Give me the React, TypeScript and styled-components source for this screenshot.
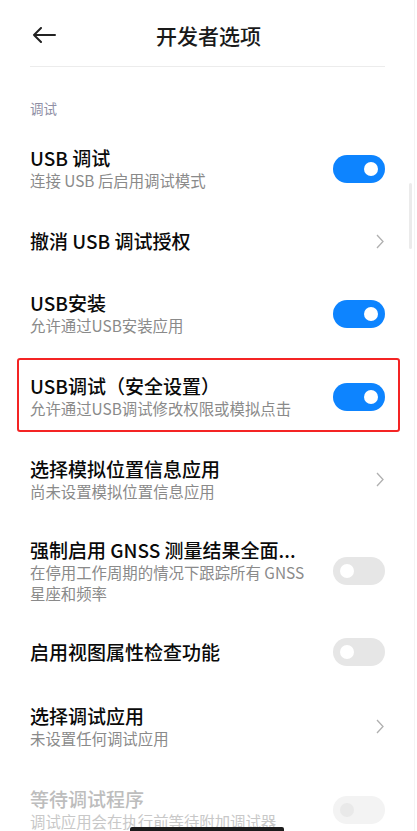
import React from "react";
import styled, { createGlobalStyle, css } from "styled-components";

const GlobalStyle = createGlobalStyle`
  html, body {
    margin: 0;
    padding: 0;
    background: #ffffff;
    overflow: hidden;
  }
  body {
    font-family: "Noto Sans CJK SC", "Noto Sans", sans-serif;
    -webkit-font-smoothing: antialiased;
  }
`;

const Page = styled.div`
  width: 417px;
  height: 831px;
  overflow: hidden;
  position: relative;
  background: #ffffff;
`;

const Header = styled.header`
  display: grid;
  grid-template-columns: 1fr auto 1fr;
  align-items: center;
  height: 62px;
  padding: 4px 32px 0 32px;
`;

const BackButton = styled.button`
  display: flex;
  align-items: center;
  justify-self: start;
  background: none;
  border: 0;
  padding: 0;
  width: 24px;
  height: 16px;
`;

const HeaderTitle = styled.h1`
  margin: 0;
  font-size: 21px;
  font-weight: 500;
  color: #1a1a1a;
  line-height: 28px;
`;

const Divider = styled.div`
  height: 1px;
  background: #ececec;
  margin: 0 32px 0 30px;
`;

const SectionLabel = styled.div`
  padding: 32px 30px 10px;
  font-size: 13.5px;
  line-height: 18px;
  color: #8f8fa5;
`;

const Row = styled.div<{ $highlight?: boolean; $tight?: boolean }>`
  position: relative;
  display: flex;
  align-items: center;
  padding: ${(p) => (p.$tight ? "17px 32px 15px 30px" : "19px 32px 19px 30px")};
  ${(p) =>
    p.$highlight &&
    css`
      &::after {
        content: "";
        position: absolute;
        top: 3px;
        bottom: 6px;
        left: 17px;
        right: 17px;
        border: 2.5px solid #f42424;
        border-radius: 3px;
        pointer-events: none;
      }
    `}
`;

const TextBlock = styled.div`
  flex: 1;
  min-width: 0;
  padding-right: 22px;
`;

const Title = styled.div<{ $disabled?: boolean }>`
  font-size: 19px;
  line-height: 24px;
  font-weight: 500;
  color: ${(p) => (p.$disabled ? "#bdbdbd" : "#0a0a0a")};
  white-space: nowrap;
`;

const Subtitle = styled.div<{ $disabled?: boolean }>`
  font-size: 15.4px;
  line-height: 21px;
  color: ${(p) => (p.$disabled ? "#c8c8c8" : "#8a8a8a")};
`;

const Track = styled.div<{ $on: boolean; $disabled?: boolean }>`
  flex: none;
  width: 52px;
  height: 28px;
  border-radius: 14px;
  display: flex;
  align-items: center;
  justify-content: ${(p) => (p.$on ? "flex-end" : "flex-start")};
  padding: 0 7px;
  box-sizing: border-box;
  background: ${(p) => (p.$on ? "#0d84ff" : p.$disabled ? "#f3f3f3" : "#e6e6e6")};
`;

const Knob = styled.div<{ $disabled?: boolean }>`
  width: 14px;
  height: 14px;
  border-radius: 50%;
  background: ${(p) => (p.$disabled ? "#e9e9e9" : "#ffffff")};
`;

const ChevronBox = styled.div`
  flex: none;
  width: 52px;
  display: flex;
  justify-content: flex-end;
  padding-right: 1px;
  box-sizing: border-box;
`;

const Scrollbar = styled.div`
  position: absolute;
  left: 409px;
  top: 183px;
  width: 3px;
  height: 66px;
  border-radius: 2px;
  background: #ebebeb;
`;

const EdgeLine = styled.div`
  position: absolute;
  right: 2px;
  top: 0;
  bottom: 0;
  width: 1px;
  background: #f4f4f4;
`;

const HomeBar = styled.div`
  position: absolute;
  left: 130px;
  bottom: 0;
  width: 154px;
  height: 4px;
  border-radius: 2px 2px 0 0;
  background: #1c1c1c;
`;

const Toggle = ({ on, disabled }: { on: boolean; disabled?: boolean }) => (
  <Track $on={on} $disabled={disabled}>
    <Knob $disabled={disabled} />
  </Track>
);

const Chevron = () => (
  <ChevronBox>
    <svg width="8" height="15" viewBox="0 0 8 15">
      <polyline points="1,1 7,7.5 1,14" fill="none" stroke="#b0b0b0" strokeWidth="1.3" />
    </svg>
  </ChevronBox>
);

interface Item {
  title: string;
  subtitle?: string;
  control: "on" | "off" | "chevron";
  disabled?: boolean;
  highlight?: boolean;
  tight?: boolean;
}

const items: Item[] = [
  { title: "USB 调试", subtitle: "连接 USB 后启用调试模式", control: "on" },
  { title: "撤消 USB 调试授权", control: "chevron" },
  { title: "USB安装", subtitle: "允许通过USB安装应用", control: "on" },
  {
    title: "USB调试（安全设置）",
    subtitle: "允许通过USB调试修改权限或模拟点击",
    control: "on",
    highlight: true,
  },
  { title: "选择模拟位置信息应用", subtitle: "尚未设置模拟位置信息应用", control: "chevron" },
  {
    title: "强制启用 GNSS 测量结果全面...",
    subtitle: "在停用工作周期的情况下跟踪所有 GNSS 星座和频率",
    control: "off",
    tight: true,
  },
  { title: "启用视图属性检查功能", control: "off" },
  { title: "选择调试应用", subtitle: "未设置任何调试应用", control: "chevron" },
  {
    title: "等待调试程序",
    subtitle: "调试应用会在执行前等待附加调试器",
    control: "off",
    disabled: true,
  },
];

export default function App() {
  return (
    <>
      <GlobalStyle />
      <Page>
        <Header>
          <BackButton aria-label="返回">
            <svg width="24" height="16" viewBox="0 0 24 16">
              <path
                d="M23 8H2M9 1L2 8l7 7"
                fill="none"
                stroke="#222"
                strokeWidth="2"
                strokeLinecap="round"
                strokeLinejoin="round"
              />
            </svg>
          </BackButton>
          <HeaderTitle>开发者选项</HeaderTitle>
          <span />
        </Header>
        <Divider />
        <SectionLabel>调试</SectionLabel>
        {items.map((item) => (
          <Row key={item.title} $highlight={item.highlight} $tight={item.tight}>
            <TextBlock>
              <Title $disabled={item.disabled}>{item.title}</Title>
              {item.subtitle && <Subtitle $disabled={item.disabled}>{item.subtitle}</Subtitle>}
            </TextBlock>
            {item.control === "chevron" ? (
              <Chevron />
            ) : (
              <Toggle on={item.control === "on"} disabled={item.disabled} />
            )}
          </Row>
        ))}
        <Scrollbar />
        <EdgeLine />
        <HomeBar />
      </Page>
    </>
  );
}
